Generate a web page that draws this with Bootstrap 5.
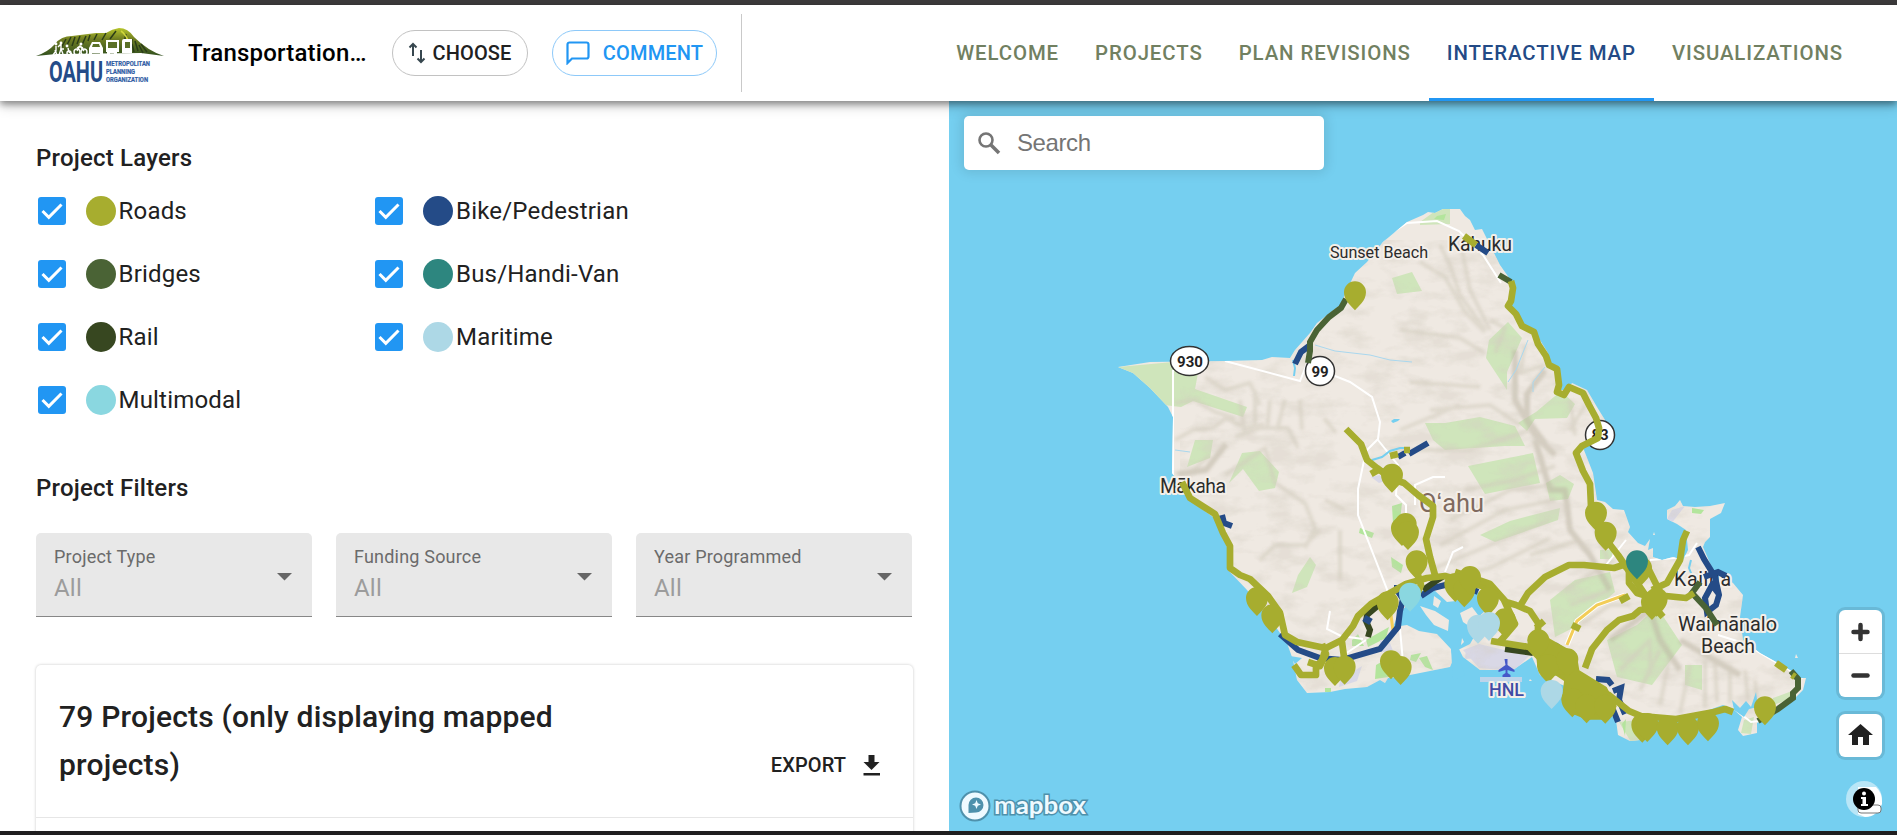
<!DOCTYPE html>
<html lang="en">
<head>
<meta charset="utf-8">
<meta name="viewport" content="width=device-width, initial-scale=1">
<title>Interactive Map</title>
<link href="https://cdn.jsdelivr.net/npm/bootstrap@5.3.0/dist/css/bootstrap.min.css" rel="stylesheet">
<style>
body{font-family:Roboto,"Liberation Sans",sans-serif;color:#212121;height:100vh;overflow:hidden;letter-spacing:.2px;font-size:24px}
.edge-top{height:5px;background:#3d3b3c;flex:none}
.edge-bottom{height:4px;background:#1f1e1f;flex:none;z-index:5}
.app-header{height:96px;flex:none;padding:0 36px;z-index:4;box-shadow:0 3px 7px rgba(0,0,0,.42),0 6px 12px rgba(0,0,0,.14)}
.brand-logo{width:128px;height:66px;margin-top:15px}
.plan-title{width:180px;margin-left:24px;font-size:24px;color:#000;font-weight:500;letter-spacing:.2px;white-space:nowrap}
.pill{height:46px;border-radius:24px;font-size:20px;font-weight:500;border:1px solid #c2c2c2;padding:0;letter-spacing:.15px;line-height:1}
.pill-choose{width:136px;margin-left:24px;color:#212121}
.pill-comment{width:165px;margin-left:24px;color:#2196f3;border-color:#8dc9f9}
.pill:hover{background:#f7f7f7}
.split{width:1px;height:78px;background:#c9c9c9;margin-left:24px}
.main-tabs{margin-left:auto}
.main-tabs .nav-link{height:95px;padding:4px 18px 0;font-size:20.4px;font-weight:500;color:#718061;letter-spacing:.9px;border-bottom:3px solid transparent;display:flex;align-items:center;white-space:nowrap}
.main-tabs .nav-link.active{color:#234a86;border-color:#2196f3}
.side-panel{width:949px;padding:39px 35px 0 36px;overflow:hidden;background:#fff}
.sect{font-size:24px;font-weight:500;line-height:36px;margin:0}
.layer-grid{display:grid;grid-template-columns:337.5px 338px;grid-auto-rows:63px;margin-top:3px}
.layer-item{display:flex;align-items:center}
.layer-item svg{width:30px;height:30px;margin-right:19px;margin-left:.5px}
.dot{width:30px;height:30px;border-radius:50%;margin-right:3px}
.filters{display:grid;grid-template-columns:repeat(3,276px);gap:24px;margin-top:27px}
.pick{height:84px;background:#e8e8e8;border-bottom:1px solid #878787;border-radius:5px 5px 0 0;padding:13px 18px 11px}
.pick-label{font-size:18px;line-height:24px;color:#6b6b6b}
.pick-value{line-height:38px;color:#9c9c9c;font-size:24px}
.pick svg{margin-top:2px}
.result-card{border:0;border-radius:5px;margin-top:48px;width:877px;height:220px;box-shadow:0 0 3px rgba(0,0,0,.23)}
.result-head{height:153px;padding:22px 33px 28px 23px;border-bottom:1px solid #e6e6e6}
.result-title{font-size:30px;line-height:48px;font-weight:500;width:540px;margin:0;letter-spacing:.2px}
.export{font-size:20px;font-weight:500;line-height:48px;letter-spacing:.1px}
.map-pane{background:#75cff0;overflow:hidden}
.map-art{width:948px;height:730px;display:block}
.search-box{left:15px;top:15px;width:360px;height:54px;border-radius:5px;background:#fff;box-shadow:0 0 12px 3px rgba(0,0,0,.1);font-family:"Liberation Sans",sans-serif;color:#757575;padding-left:13px;padding-bottom:1px;letter-spacing:-.4px}
.map-tools{right:15px;top:509px;width:43px}
.tool{width:43px;background:#fff;border-radius:6px;box-shadow:0 0 0 3px rgba(0,0,0,.1)}
.tool button{height:43px;width:43px;border:0;background:transparent;padding:0;display:block}
.tool button+button{border-top:1px solid #ddd;height:44px}
.lbl{font-family:Roboto,sans-serif;paint-order:stroke;stroke:#f4efe9;stroke-width:4px;stroke-linejoin:round;fill:#2b2b2b}
</style>
</head>
<body class="d-flex flex-column">
<div class="edge-top"></div>
<header class="app-header bg-white d-flex align-items-center position-relative">
  <svg class="brand-logo" viewBox="0 0 128 66">
    <defs><linearGradient id="hill" x2="0" y2="1"><stop stop-color="#b7c62b"/><stop offset=".4" stop-color="#6f7d22"/><stop offset="1" stop-color="#32501f"/></linearGradient></defs>
    <path d="M0 28Q12 24 19 16Q25 8 36 8L60 5L70 5Q76 1 83 0Q92 0 98 9Q112 23 128 28L105 25L20 26Z" fill="url(#hill)"/>
    <path d="M25 20l5-9M31 17l4-8M36 18l3-9M41 16l3-8M46 17l4-9M52 13l2-6M58 12l3-6M66 12l4-7M74 11l6-8M88 15l2-9M95 22l1-11M102 23l-3-10M111 24l-6-8M98 24l-2-8M107 25l-4-8" stroke="#2b3d18" stroke-width="1.500"/>
    <path d="M85 3q5 3 9 14" stroke="#d0d73b" stroke-width="1.500" fill="none"/>
    <g fill="none" stroke="#fff" stroke-width="1.400"><path d="M17 27l3-4v-5M21 27l-2-5M23 27l2-6v-5l-3 3M27 26l-2-5 3 0M32 20l1 4 3 2"/><circle cx="33" cy="25" r="2"/><circle cx="41" cy="24" r="3"/><circle cx="48" cy="24" r="3"/><path d="M41 23l3-5 4 5M41 20l3-2 3 2"/></g>
    <g fill="#fff"><circle cx="20" cy="16" r="1.400"/><circle cx="25" cy="15" r="1.400"/><circle cx="31" cy="18" r="1.400"/><circle cx="45" cy="16" r="1.500"/><path d="M53 27v-7l3-6h8l3 6v7h-3v-2h-8v2zM70 12h13v12h-2v3h-3v-2h-4v2h-3v-3h-1zM86 25V13q0-2 2-2h8v14z"/></g>
    <path d="M57 16h6l1 3h-8zM72 14h9v6h-9zM89 14h5v6h-5z" fill="#5b7127"/>
    <text x="13" y="54" font-size="29" font-weight="700" font-family="Roboto,sans-serif" textLength="54" lengthAdjust="spacingAndGlyphs" fill="#244c88" letter-spacing="0">OAHU</text>
    <g font-family="Roboto,sans-serif" font-size="6.800" font-weight="700" fill="#315da4" stroke="#315da4" stroke-width=".2" letter-spacing="0"><text x="70" y="38" textLength="44" lengthAdjust="spacingAndGlyphs">METROPOLITAN</text><text x="70" y="46" textLength="29" lengthAdjust="spacingAndGlyphs">PLANNING</text><text x="70" y="54" textLength="42" lengthAdjust="spacingAndGlyphs">ORGANIZATION</text></g>
  </svg>
  <div class="plan-title">Transportation…</div>
  <button class="btn pill pill-choose d-flex align-items-center justify-content-center"><svg width="18" height="22" viewBox="0 0 18 22" fill="none" stroke="#37474f" stroke-width="2" style="margin-right:6px"><path d="M5 14V2M1.500 5.500L5 2l3.500 3.500M13 8v12M9.500 16.500L13 20l3.500-3.500"/></svg>CHOOSE</button>
  <button class="btn pill pill-comment d-flex align-items-center justify-content-center"><svg width="24" height="24" viewBox="0 0 24 24" fill="none" stroke="#2196f3" stroke-width="2.200" style="margin-right:13px"><path d="M1.500 22V3.500a2 2 0 0 1 2-2h17a2 2 0 0 1 2 2v12a2 2 0 0 1-2 2H6z"/></svg>COMMENT</button>
  <div class="split"></div>
  <nav class="nav main-tabs flex-nowrap">
    <a class="nav-link" href="#">WELCOME</a><a class="nav-link" href="#">PROJECTS</a><a class="nav-link" href="#">PLAN REVISIONS</a><a class="nav-link active" href="#">INTERACTIVE MAP</a><a class="nav-link" href="#">VISUALIZATIONS</a>
  </nav>
</header>
<svg width="0" height="0" class="position-absolute"><defs>
  <symbol id="check" viewBox="0 0 30 30"><rect x="1" y="1" width="28" height="28" rx="3" fill="#2196f3"/><path d="M5.500 15l6.300 6.300L24.500 8.500" fill="none" stroke="#fff" stroke-width="3"/></symbol>
  <path id="pin" d="M0 0C-10-12-33-28-33-54A33 33 0 0 1 33-54C33-28 10-12 0 0Z"/>
</defs></svg>
<main class="d-flex flex-grow-1 overflow-hidden">
  <section class="side-panel flex-shrink-0">
    <h2 class="sect">Project Layers</h2>
    <div class="layer-grid">
      <label class="layer-item"><svg><use href="#check"/></svg><span class="dot" style="background:#a7ad2f"></span>Roads</label>
      <label class="layer-item"><svg><use href="#check"/></svg><span class="dot" style="background:#244b87"></span>Bike/Pedestrian</label>
      <label class="layer-item"><svg><use href="#check"/></svg><span class="dot" style="background:#4a6335"></span>Bridges</label>
      <label class="layer-item"><svg><use href="#check"/></svg><span class="dot" style="background:#2d867f"></span>Bus/Handi-Van</label>
      <label class="layer-item"><svg><use href="#check"/></svg><span class="dot" style="background:#374720"></span>Rail</label>
      <label class="layer-item"><svg><use href="#check"/></svg><span class="dot" style="background:#add8e6"></span>Maritime</label>
      <label class="layer-item"><svg><use href="#check"/></svg><span class="dot" style="background:#8ad7e0"></span>Multimodal</label>
    </div>
    <h2 class="sect" style="margin-top:39px">Project Filters</h2>
    <div class="filters">
      <div class="pick d-flex justify-content-between align-items-center"><div><div class="pick-label">Project Type</div><div class="pick-value">All</div></div><svg width="20" height="8"><path d="M3 0h15l-7.500 7.500z" fill="#666"/></svg></div>
      <div class="pick d-flex justify-content-between align-items-center"><div><div class="pick-label">Funding Source</div><div class="pick-value">All</div></div><svg width="20" height="8"><path d="M3 0h15l-7.500 7.500z" fill="#666"/></svg></div>
      <div class="pick d-flex justify-content-between align-items-center"><div><div class="pick-label">Year Programmed</div><div class="pick-value">All</div></div><svg width="20" height="8"><path d="M3 0h15l-7.500 7.500z" fill="#666"/></svg></div>
    </div>
    <div class="card result-card">
      <div class="result-head d-flex justify-content-between align-items-end">
        <h3 class="result-title">79 Projects (only displaying mapped projects)</h3>
        <div class="export d-flex align-items-center">EXPORT<svg width="17" height="21" viewBox="0 0 17 21" style="margin-left:17px" fill="#212121"><path d="M5.500 0h6v7h5l-8 8-8-8h5zM.5 18h16.500v2.500H.5z"/></svg></div>
      </div>
    </div>
  </section>
  <section class="map-pane flex-grow-1 position-relative">
    <svg class="map-art" viewBox="949 101 948 730" letter-spacing="0">
      <defs>
        <path id="coast" d="M1118 367L1150 362 1225 361 1262 360 1272 357 1290 358 1295 350 1310 333 1317 323 1340 305 1347 290 1355 273 1367 262 1383 242 1407 222 1423 215 1428 212 1435 213 1443 209 1460 209 1465 216 1470 220 1475 230 1482 229 1490 245 1500 265 1512 282 1513 297 1508 307 1522 327 1535 332 1548 353 1550 363 1560 367 1560 390 1567 390 1572 383 1587 390 1597 407 1605 420 1603 433 1582 445 1593 473 1597 500 1605 502 1613 509 1624 510 1630 527 1628 532 1638 543 1645 546 1650 539 1648 550 1653 548 1653 557 1662 560 1673 557 1683 560 1688 550 1686 530 1677 524 1667 519 1667 510 1675 506 1680 500 1683 506 1695 507 1710 506 1725 503 1721 513 1710 519 1710 537 1705 542 1703 547 1713 570 1733 583 1743 595 1740 617 1743 640 1760 653 1778 663 1795 673 1797 678 1806 678 1803 690 1793 700 1777 713 1757 723 1757 733 1743 736 1738 730 1742 717 1733 709 1723 705 1703 712 1677 716 1655 716 1645 730 1640 740 1630 741 1618 735 1616 720 1600 705 1575 690 1555 682 1540 675 1532 657 1513 670 1480 670 1463 657 1458 647 1462 632 1466 616 1450 602 1448 632 1453 660 1450 667 1400 677 1388 678 1385 683 1380 680 1367 687 1345 689 1330 692 1307 693 1297 680 1293 660 1287 643 1273 623 1247 590 1228 570 1227 547 1217 520 1190 500 1172 473 1173 417 1168 407 1150 388 1133 373Z"/>
        <clipPath id="land"><use href="#coast"/></clipPath>
        <filter id="soft" x="-10%" y="-10%" width="120%" height="120%"><feGaussianBlur stdDeviation="1.600"/></filter>
        <filter id="relief" x="0" y="0" width="1" height="1"><feTurbulence type="fractalNoise" baseFrequency=".03 .06" numOctaves="4" seed="8"/><feColorMatrix values="0 0 0 0 .66  0 0 0 0 .62  0 0 0 0 .54  3.5 0 0 0 -1.600"/></filter>
      </defs>
      <use href="#coast" fill="#efe9e2"/>
      <g clip-path="url(#land)">
        <g fill="#cfe5bb">
          <path d="M1118 367l55-5 26 6-4 21 52 18-4 10-50-16-12 6-26-3-17-10z"/>
          <path d="M1420 222l18-13h12v15l-30 1zM1392 278l20-6 10 19-25 3zM1508 322l14 16-15 34v18l-21-32 3-18zM1536 412l25-21 14 13-8 14-32 1-8 12-9-8zM1425 423l20 0 35-6 35 9 10 20-20 0-60 4-12-10z"/>
          <path d="M1468 466l65-13 7 30-55 11zM1560 475l14 9-6 15-18 2-4-18zM1480 535l30-14 50-13-2 12-63 22zM1242 453l18-2 19 21-4 16-16 3-16-22-14 14zM1298 575l12-18 6 8-9 22-15 6zM1195 440h18l-3 18-23 9z"/>
          <path d="M1550 600l25-20 35-8 5 20-40 35-20 10zM1607 640l30-15 20-18 25 38-30 40-35-8zM1685 665l17 0 0 25-17-5zM1773 698l19-7-3 8-20 8zM1619 722l20-2 10 20-18 2zM1744 720l10-3-3 17-10-1zM1600 550h12v9h-12z"/>
        </g>
        <g fill="#b3e59c"><path d="M1392 506l10-3-2 18-7 2zM1360 528l14 5-2 5-13-5zM1391 557l12 8-2 8-9-6zM1352 640l6-6 6 12-12 0zM1366 640l23-13-3 11-18 9zM1419 658l8-2 6 14-8-3zM1376 665l18-10-5 22-14 2zM1411 655l10-2-5 9-6-2zM1422 600l9-2 2 10-9 0zM1325 688h6v4h-6zM1437 216l9-2-2 6-10-1zM1692 508l12 2-3 4-9-1zM1622 724l4-5-1 17z"/></g>
        <g fill="#d9d8e6"><path d="M1463 650l16-6 50 12-15 15-35-3zM1380 640l10 3 5 13-15-5zM1340 680l22-14-5 15-18 6zM1667 519l5-9 13-4-14 18zM1371 477l9-2 5 6-6 2zM1466 649l10-2 3 11-14 1z"/></g>
        <g fill="none" stroke="#d2ccbd" stroke-width="4" opacity=".55" filter="url(#soft)" stroke-linejoin="round">
          <path d="M1175 403l20-3 20 12 20 6M1175 440l18-10 20-2 13-10 20 10 18-4M1235 437l25-9 28 0 10 20M1210 455l-20 18-15 0M1225 475l40-27 10 35 30 20 10 25-10 20M1205 377l20 13 25-7 10 22M1240 400l5 35M1255 390l0 35M1270 400l-3 30M1285 400l-8 30M1300 400l2 30M1324 418l12 15M1260 560l15-15 30 0 15-15M1340 530l0 50M1325 500l20 10"/>
          <path d="M1440 245l10 20 10 30 25 35M1420 262l25 15 20 35 20 20M1460 240l10 50 20 40M1400 330l60 8 25 15M1410 382l70 5M1490 320l15 8-10 25M1525 345l-5 28 25-8M1430 410l60-5 30 20M1400 430l60-25M1390 450l80 0 60-20M1570 400l5 35M1585 405l-15 25"/>
          <path d="M1465 490l50-10 40-14M1450 520l60-30 45-5M1440 545l65-35 50-10M1430 570l60-25 60-25M1450 578l40-10 60-30M1530 555l50-15M1590 515l20 50M1565 590l50-30M1570 605l40-15M1580 625l30-20 20 0M1620 670l30-30 0 35M1640 690l20-40M1670 655l-10 50M1690 665l-10 48M1705 660l0 48M1715 660l2 42M1730 665l0 38M1745 670l3 30M1755 680l3 30"/>
          <path stroke="#bdb6a4" stroke-width="6" d="M1545 370l-18 24 0 25 18 25M1515 350l0 50 20 35 20 20M1535 440l15 50 15 0 5 40 20 25 20 35M1610 640l40-30 10 30 20 30M1680 640l60 35M1178 474l28-4 20-26"/>
        </g>
        <path filter="url(#relief)" opacity=".38" d="M1180 400h130v160h-110zM1400 240h90l130 250 180 200v60H1600l-60-110-110-60z"/>
        <g fill="none" stroke="#fff" stroke-width="2">
          <path d="M1360 262l30-28 17-11 30-2 22 10 24 24 18 28M1225 361l75 20 8-20 3-12M1330 374l20 8 22 15 8 25-2 17-12 12-8 38v26l32 82 8 10 5 55M1378 440l20 25-2 30 10 10v12M1415 505l0-20 18-8h12M1330 611l-3 18 14 7 22 3M1173 370l0 70 0 35M1366 640l-30 20M1445 572l8-20 10-5M1650 560l24-2 15-3 8-12M1718 635l25 8 60 35M1733 708l18 14 16-2M1606 565l20-25"/>
        </g>
        <g fill="none" stroke="#a9d7ee" stroke-width="1"><path d="M1315 345l20 6 35 4 20 5 22 2M1175 450l15 2M1528 340l-12 30-8 12M1545 367l-12 15v10"/><path stroke="#75cff0" stroke-width="2" d="M1372 460l10-3 8-6 10-3 8 0M1293 360l2 8-1 8M1691 560l-2 8 4 10"/></g>
      </g>
      <path d="M1480 677h42v5h-42z" fill="#bcd4ea"/>
      <path d="M1391 421l3-2 6 0-2 2-5 2z" fill="#75cff0"/>
      <g fill="#75cff0">
        <path d="M1398 615l22-24 14-1 13 12 9-1 8-10 18 2 3 18-8 7 2 10-9 16-12 6 2 10 5 15-12 5-2-31-14-15-18-3-12-6-14 2z"/>
        <path d="M1290 656l12 2-7 6zM1732 700l8 8 6-7 5 6 5-15 2 15-9 2-5 8-10-7z"/>
      </g>
      <path d="M1420 606l15 5 14 9-1 11-14-6-8-10zM1434 596l7 5-3 7-5-3zM1460 613l12-6 6 8-6 13-9-6zM1462 638l2 4-3 3zM1654 532l1 3-2 0zM1796 654l2 4-3 0zM1530 679l2 2-3 0z" fill="#efe9e2"/>
      <path d="M1625 595l-28 10-20 16-10 24" fill="none" stroke="#fff" stroke-width="5"/><path d="M1625 595l-28 10-20 16-10 24M1391 615l2 16" fill="none" stroke="#f3cd58" stroke-width="3"/>
      <g fill="#fff" stroke="#333" stroke-width="1.500"><ellipse cx="1189.500" cy="361" rx="19" ry="14.500"/><circle cx="1320" cy="371" r="14.500"/><circle cx="1600" cy="435" r="14.500"/></g>
      <g fill="#222" font-family="Roboto,sans-serif" font-weight="700" font-size="15" text-anchor="middle"><text x="1190" y="366.500">930</text><text x="1320" y="376.500">99</text><text x="1600" y="440">83</text></g>
      <g class="lbl">
        <text x="1330" y="258" font-size="16.500" textLength="98" lengthAdjust="spacingAndGlyphs">Sunset Beach</text>
        <text x="1448" y="251" font-size="19.500" textLength="64">Kahuku</text>
        <text x="1160" y="493" font-size="19.500" textLength="66">Mākaha</text>
        <text x="1419" y="511.500" font-size="26" textLength="65" lengthAdjust="spacingAndGlyphs" style="fill:#806a5e">Oʻahu</text>
        <text x="1674" y="586" font-size="19.500" textLength="57">Kailua</text>
        <text x="1678" y="630.500" font-size="20" textLength="99" lengthAdjust="spacingAndGlyphs">Waimānalo</text>
        <text x="1701" y="653" font-size="20" textLength="54" lengthAdjust="spacingAndGlyphs">Beach</text>
        <text x="1489" y="696" font-size="18" font-weight="500" textLength="35" style="fill:#414ba5">HNL</text>
      </g>
      <path d="M1504.500 659h3v6l7 5v2l-7-2v3l3 2v2h-8v-2l3-2v-3l-7 2v-2l7-5z" fill="#4658c8"/>
      <g fill="none" stroke="#244b87" stroke-width="6">
        <path d="M1295 364l6-12 8-6M1476 245l12 8M1398 457l7-4M1409 454l19-11M1222 515l2 8 8 3M1280 634l18 16 22 8 22 2 38-11 18-22 2-16 3-12-6-9v-5M1421 596l12-8 12-3h15M1698 547l6 12 11 18 4 18-3 10-9 7-2-14 7-13 6 8M1704 577l14-5 8 4M1596 679l12 1 4 5M1613 691l8-3-2 12 6 14M1612 707l6 15M1478 592l-6-3M1562 650l-7-5"/>
      </g>
      <g fill="none" stroke="#4a6335" stroke-width="6"><path d="M1346 299l-5 9-12 9-12 13-7 12v9l-2 12M1499 275l12 7M1700 582l-8 11 14 15 11 17M1791 671l7 8v9l-5 5v5l-15 11-20 12"/></g>
      <g fill="none" stroke="#374720" stroke-width="6"><path d="M1380 604l-13 11-1 6 4 9-2 7M1423 590l13-9 8-5M1505 649l28 4"/></g>
      <path d="M1364 618l7 4" stroke="#244b87" stroke-width="7"/>
      <g fill="none" stroke="#a7ad2f" stroke-width="6.700" stroke-linejoin="round">
        <path d="M1464 236l12 9M1511 281l2 7-2 13-3 5 8 8 6 12 12 6 4 12 8 12 3 9 8 4 2 16-2 7 7 3 5-8 14 6 6 12 7 13 3 10-1 10-16 8-6 7 7 18 7 13 1 22 10 27 17 22 30 44 15 18"/>
        <path d="M1346 429l15 15 6 16 10 8 15 11 12 4 14 12 15 11v11l-7 22 4 18 5 18M1371 474l7-4M1390 456l8-2M1404 450h6"/>
        <path d="M1182 482l8 16 25 16 8 19 7 13v22l10 7 10 4 18 17 12 17 5 22 12 7 28 6M1294 665l7 10 15 0v-8l8-9M1308 662l12 4 6-12-4-10M1322 660l4-12 16-8 11-14 5-10 13-12 35-20 21-6 18-2 25 7 20 5M1342 642l2 15M1418 575l3 10-5 12"/>
        <path d="M1455 572l35 12 16 18 10 3 14 6 8 12v14M1520 606l8-13 17-16 24-12 15 0 30 3 9-3 6 4v14l8 10 10 3M1663 598l-11-22-8-16M1652 590l15-7 13-23 3-20 4-9M1652 596l14 0 20 2 8-5M1655 608l-15 2-7 6-14 4-12 10-15 19-7 19M1491 641l38 6 20 20 30 20 30 8 20 16 12 5 35 3 38-7 11-3 8 3M1776 663l10 7M1792 675l3 2M1536 628l8-7M1504 600l11 24-17 20M1572 625l8 4M1620 601l9-5"/>
      </g>
      <path transform="translate(1450 440) scale(.3333)" d="M232 600l30-32 38 28 80 45 8 50 82 50 30 58-34 40-56 0-43-18-32-40 10-80-50 10-33-30-4-40z" fill="#a7ad2f"/>
      <g fill="#a7ad2f">
        <g transform="translate(1100 190) scale(.3333)"><use href="#pin" x="765" y="361"/></g>
        <g transform="translate(1100 440) scale(.3333)"><use href="#pin" x="876" y="158"/><use href="#pin" x="906" y="318"/><use href="#pin" x="917" y="306"/><use href="#pin" x="924" y="330"/><use href="#pin" x="950" y="418"/><use href="#pin" x="471" y="528"/><use href="#pin" x="517" y="580"/><use href="#pin" x="863" y="541"/><use href="#pin" x="705" y="738"/><use href="#pin" x="734" y="734"/><use href="#pin" x="873" y="718"/><use href="#pin" x="902" y="735"/><use href="#pin" x="1066" y="486"/><use href="#pin" x="1093" y="502"/><use href="#pin" x="1110" y="465"/></g>
        <g transform="translate(1450 440) scale(.3333)"><use href="#pin" x="114" y="528"/><use href="#pin" x="164" y="592"/><use href="#pin" x="438" y="272"/><use href="#pin" x="467" y="332"/><use href="#pin" x="573" y="437"/><use href="#pin" x="606" y="540"/><use href="#pin" x="620" y="530"/><use href="#pin" x="265" y="655"/><use href="#pin" x="294" y="730"/><use href="#pin" x="352" y="712"/><use href="#pin" x="367" y="832"/><use href="#pin" x="410" y="850"/><use href="#pin" x="466" y="851"/><use href="#pin" x="577" y="908"/><use href="#pin" x="592" y="906"/><use href="#pin" x="653" y="916"/><use href="#pin" x="714" y="916"/><use href="#pin" x="774" y="904"/><use href="#pin" x="945" y="856"/></g>
      </g>
      <g transform="translate(1450 440) scale(.3333)"><use href="#pin" x="561" y="418" fill="#2d867f"/><use href="#pin" x="84" y="611" fill="#add8e6"/><use href="#pin" x="117" y="603" fill="#add8e6"/><use href="#pin" x="305" y="807" fill="#add8e6"/><use href="#pin" x="-120" y="515" fill="#8ad7e0"/></g>
      <g transform="translate(975 806)">
        <circle r="14.500" fill="#eefaff" stroke="#4e91ac" stroke-width="2"/><path d="M-6.500 7V-1A7.500 7.500 0 1 1 1 6.500Z" fill="#4e91ac"/><path d="M1.500-6l1.300 3.200L6-1.500 2.800-.2 1.500 3 .2-.2-3-1.500.2-2.800z" fill="#eefaff"/>
        <text x="19" y="7.500" font-family="Lato,Roboto,sans-serif" font-weight="700" font-size="25" textLength="92" lengthAdjust="spacingAndGlyphs" fill="#eefaff" stroke="#4e91ac" stroke-width="3" paint-order="stroke">mapbox</text>
      </g>
    </svg>
    <div class="search-box position-absolute d-flex align-items-center"><svg width="24" height="24" viewBox="0 0 24 24" fill="none" stroke="#757575" class="me-3"><circle cx="9" cy="9" r="6.500" stroke-width="2.600"/><path d="M13.500 13.500l8.500 8.500" stroke-width="3.500"/></svg>Search</div>
    <div class="map-tools position-absolute">
      <div class="tool"><button aria-label="Zoom in"><svg width="43" height="43"><path d="M14.500 22h14M21.500 15v14" stroke="#333" stroke-width="4.500" stroke-linecap="round"/></svg></button><button aria-label="Zoom out"><svg width="43" height="43"><path d="M14.500 21.500h14" stroke="#333" stroke-width="4.500" stroke-linecap="round"/></svg></button></div>
      <div class="tool" style="margin-top:17px"><button aria-label="Home"><svg width="43" height="43"><path d="M21.500 10L34 21h-4v10h-6v-8h-5v8h-6V21H9z" fill="#212121"/></svg></button></div>
      <svg width="43" height="38" class="d-block" style="margin-top:23px"><circle cx="25" cy="19" r="18" fill="#b9e6f7"/><path d="M19 7h18q6 6 6 14v3q-5 13-17 13l-7-3z" fill="#fff"/><rect x="19" y="25" width="23" height="8" rx="3" fill="#fff" stroke="#777"/><circle cx="25" cy="19" r="11" fill="#000"/><path d="M22 17h5v7h2v2h-7v-2h1.500v-5H22z" fill="#fff"/><circle cx="25" cy="13.500" r="2" fill="#fff"/></svg>
    </div>
  </section>
</main>
<div class="edge-bottom"></div>
<script src="https://cdn.jsdelivr.net/npm/bootstrap@5.3.0/dist/js/bootstrap.bundle.min.js"></script>
</body>
</html>
